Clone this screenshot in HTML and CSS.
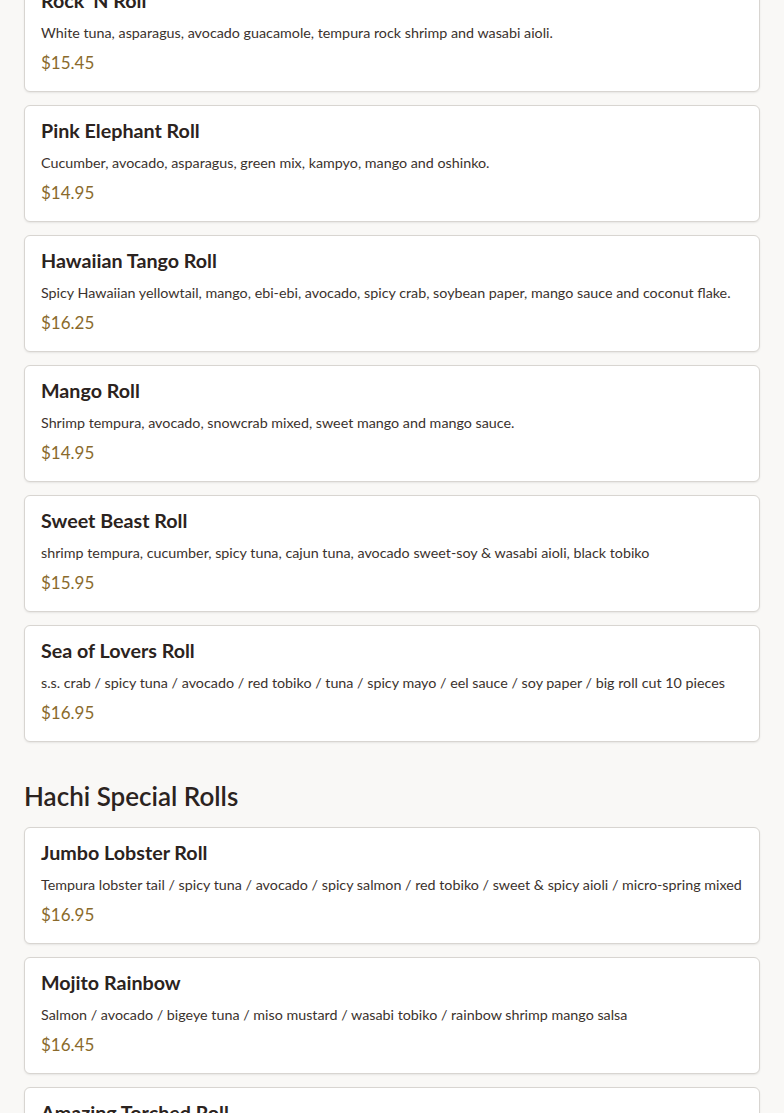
FILE: index.html
```html
<!DOCTYPE html>
<html lang="en">
<head>
<meta charset="utf-8">
<title>Menu</title>
<link rel="stylesheet" href="styles.css">
</head>
<body>
<main class="menu">
  <section class="section section-first">
    <div class="items">
      <article class="item">
        <h3 class="item-name">Rock 'N Roll</h3>
        <p class="item-desc">White tuna, asparagus, avocado guacamole, tempura rock shrimp and wasabi aioli.</p>
        <p class="item-price">$15.45</p>
      </article>
      <article class="item">
        <h3 class="item-name">Pink Elephant Roll</h3>
        <p class="item-desc">Cucumber, avocado, asparagus, green mix, kampyo, mango and oshinko.</p>
        <p class="item-price">$14.95</p>
      </article>
      <article class="item">
        <h3 class="item-name">Hawaiian Tango Roll</h3>
        <p class="item-desc">Spicy Hawaiian yellowtail, mango, ebi-ebi, avocado, spicy crab, soybean paper, mango sauce and coconut flake.</p>
        <p class="item-price">$16.25</p>
      </article>
      <article class="item">
        <h3 class="item-name">Mango Roll</h3>
        <p class="item-desc">Shrimp tempura, avocado, snowcrab mixed, sweet mango and mango sauce.</p>
        <p class="item-price">$14.95</p>
      </article>
      <article class="item">
        <h3 class="item-name">Sweet Beast Roll</h3>
        <p class="item-desc">shrimp tempura, cucumber, spicy tuna, cajun tuna, avocado sweet-soy &amp; wasabi aioli, black tobiko</p>
        <p class="item-price">$15.95</p>
      </article>
      <article class="item">
        <h3 class="item-name">Sea of Lovers Roll</h3>
        <p class="item-desc">s.s. crab / spicy tuna / avocado / red tobiko / tuna / spicy mayo / eel sauce / soy paper / big roll cut 10 pieces</p>
        <p class="item-price">$16.95</p>
      </article>
    </div>
  </section>
  <section class="section">
    <h2 class="section-title">Hachi Special Rolls</h2>
    <div class="items">
      <article class="item">
        <h3 class="item-name">Jumbo Lobster Roll</h3>
        <p class="item-desc">Tempura lobster tail / spicy tuna / avocado / spicy salmon / red tobiko / sweet &amp; spicy aioli / micro-spring mixed</p>
        <p class="item-price">$16.95</p>
      </article>
      <article class="item">
        <h3 class="item-name">Mojito Rainbow</h3>
        <p class="item-desc">Salmon / avocado / bigeye tuna / miso mustard / wasabi tobiko / rainbow shrimp mango salsa</p>
        <p class="item-price">$16.45</p>
      </article>
      <article class="item">
        <h3 class="item-name">Amazing Torched Roll</h3>
        <p class="item-desc">Torched salmon / spicy tuna / avocado / cucumber / eel sauce / spicy mayo</p>
        <p class="item-price">$16.95</p>
      </article>
    </div>
  </section>
</main>
</body>
</html>
```

FILE: styles.css
```css
html, body {
  margin: 0;
  padding: 0;
  background: #f9f8f6;
}
body {
  font-family: "Lato", "Noto Sans", sans-serif;
  color: #2b2320;
  overflow: hidden;
  height: 1113px;
}
.menu {
  padding: 0 24px;
  margin-top: -25px;
}
.section-title {
  margin: 0;
  padding: 37px 0 14px;
  font-size: 26px;
  line-height: 34px;
  font-weight: 600;
  color: #2b2320;
}
.items {
  display: flex;
  flex-direction: column;
  gap: 13px;
}
.item {
  background: #ffffff;
  border: 1px solid #d8d5d1;
  border-radius: 6px;
  box-shadow: 0 1px 2px rgba(0, 0, 0, 0.08);
  padding: 14px 16px 15px;
  display: flex;
  flex-direction: column;
  height: 117px;
  box-sizing: border-box;
}
.item-name {
  margin: 0;
  font-size: 19.7px;
  line-height: 22px;
  font-weight: 700;
  color: #2b2320;
}
.item-desc {
  margin: 11px 0 0;
  font-size: 14.3px;
  line-height: 20px;
  color: #3b322d;
}
.item-price {
  margin: 9px 0 0;
  font-size: 17px;
  line-height: 22px;
  color: #8a6a2c;
}
```
